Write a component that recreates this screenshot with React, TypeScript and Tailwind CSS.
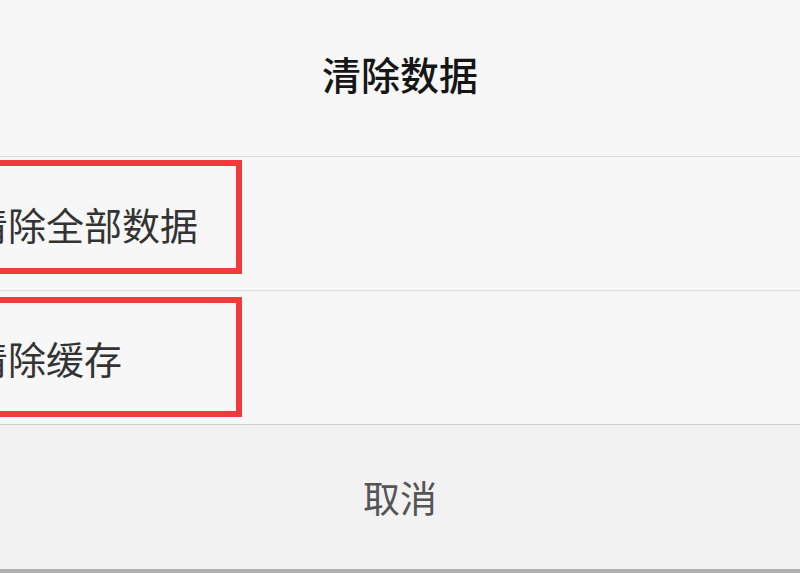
const font = { fontFamily: '"Noto Sans CJK SC", "Noto Sans", sans-serif' };

type Item = { label: string; box: string };

const items: Item[] = [
  { label: '清除全部数据', box: 'top-[3px] bottom-[16px]' },
  { label: '清除缓存', box: 'top-[6px] bottom-[7px]' },
];

function Row({ item }: { item: Item }) {
  return (
    <div className="relative flex h-[133px] items-center">
      <span className="ml-[-30px] text-[38px] leading-none text-[#333333]">{item.label}</span>
      {/* red annotation frame */}
      <div className={`pointer-events-none absolute left-[-20px] w-[262px] border-[6px] border-[#ee3b3b] ${item.box}`} />
    </div>
  );
}

export default function App() {
  return (
    <div className="flex h-[573px] w-[800px] flex-col overflow-hidden bg-[#f7f7f7]" style={font}>
      <div className="flex h-[156px] items-center justify-center pb-[10px]">
        <h1 className="text-[39px] font-medium leading-none text-[#161616]">清除数据</h1>
      </div>
      <div className="h-px bg-[#dcdcdc]" />
      <Row item={items[0]} />
      <div className="h-px bg-[#dcdcdc]" />
      <Row item={items[1]} />
      <div className="h-px bg-[#cfcfcf]" />
      <div className="flex h-[144px] items-center justify-center bg-[#f2f2f2]">
        <span className="text-[37px] leading-none text-[#555555]">取消</span>
      </div>
      <div className="h-[4px] bg-[#b0b0b0]" />
    </div>
  );
}
